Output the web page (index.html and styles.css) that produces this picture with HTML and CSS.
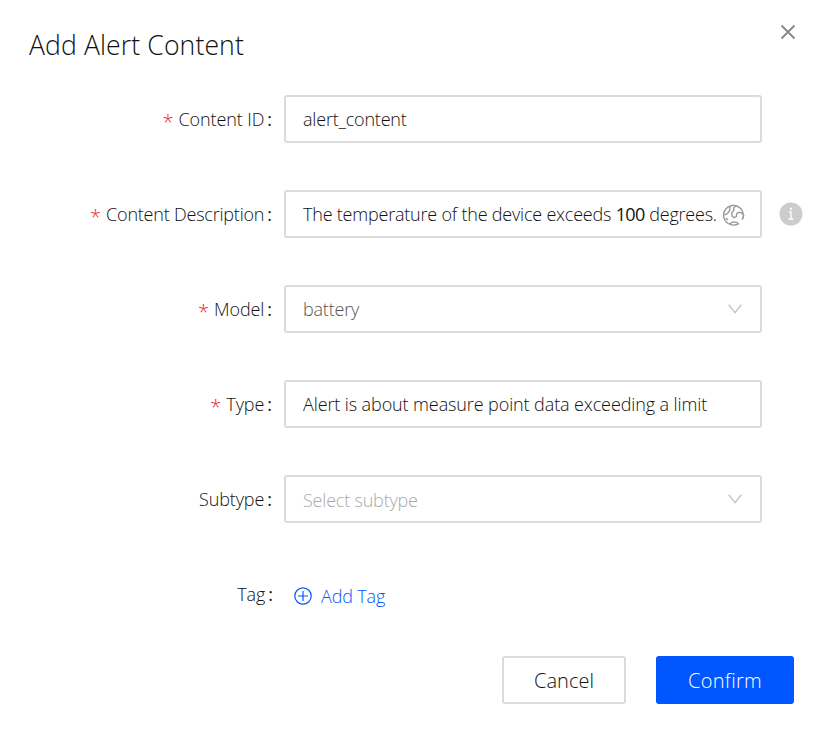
FILE: index.html
```html
<!DOCTYPE html>
<html lang="en">
<head>
<meta charset="utf-8">
<title>Add Alert Content</title>
<link rel="stylesheet" href="styles.css">
</head>
<body>
<main class="dialog">
  <header class="header">
    <h1 class="title">Add Alert Content</h1>
    <svg class="close" width="16" height="16" viewBox="0 0 16 16"><path d="M1.5 1.5l13 13M14.5 1.5l-13 13"/></svg>
  </header>
  <form class="form">
    <div class="row">
      <div class="label"><i class="req">*</i><span class="name">Content ID</span><b class="colon">:</b></div>
      <div class="field"><span class="value">alert_content</span></div>
    </div>
    <div class="row">
      <div class="label"><i class="req">*</i><span class="name desc">Content Description</span><b class="colon">:</b></div>
      <div class="field"><span class="value clip">The temperature of the device exceeds <span class="num">100</span> degrees.</span>
        <svg class="globe" width="22" height="22" viewBox="0 0 22 22"><path d="M19.2 15.6A9.8 9.8 0 1 0 16 19.3M19.2 15.6A9.8 9.8 0 0 0 20.8 11M1.6 11l3-1.6 2-3 .4-3.4M2.6 14.4l2.6 1.4M13 1.6l-2.4 2.6.2 2.2-2 2.2.2 3.4 2 1.6 2.4-1 .2-2.6 1.4-1.6 2.8.2 1.8 1.2M6.5 19.8l3.4-1.8 5 .6"/></svg>
      </div>
      <svg class="info" width="24" height="24" viewBox="0 0 24 24"><circle cx="12" cy="12" r="11.5"/><path d="M9.8 9.8h2.2v7M9.5 17h5"/><rect x="11" y="5.8" width="2" height="2"/></svg>
    </div>
    <div class="row">
      <div class="label"><i class="req">*</i><span class="name">Model</span><b class="colon">:</b></div>
      <div class="field"><span class="value muted">battery</span><svg class="arrow" width="14" height="10" viewBox="0 0 14 10"><path d="M.7.8L7 8.6 13.3.8"/></svg></div>
    </div>
    <div class="row">
      <div class="label"><i class="req">*</i><span class="name">Type</span><b class="colon">:</b></div>
      <div class="field"><span class="value v-type">Alert is about measure point data exceeding a limit</span></div>
    </div>
    <div class="row">
      <div class="label"><span class="name">Subtype</span><b class="colon">:</b></div>
      <div class="field"><span class="value placeholder">Select subtype</span><svg class="arrow" width="14" height="10" viewBox="0 0 14 10"><path d="M.7.8L7 8.6 13.3.8"/></svg></div>
    </div>
    <div class="row">
      <div class="label tag"><span class="name">Tag</span><b class="colon">:</b></div>
      <a class="add"><svg width="18" height="18" viewBox="0 0 18 18"><circle cx="9" cy="9" r="8.2"/><path d="M9 4v10M4 9h10"/></svg><span class="add-text">Add Tag</span></a>
    </div>
  </form>
  <footer class="footer">
    <button class="btn cancel"><span>Cancel</span></button>
    <button class="btn confirm"><span>Confirm</span></button>
  </footer>
</main>
</body>
</html>
```
FILE: styles.css
```css
* { box-sizing: border-box; }
body { margin: 0; background: #fff; color: #111; font: 300 18px/24px "Open Sans", "Noto Sans", sans-serif; }
.dialog { width: 823px; height: 731px; padding: 24px 27px 0 28px; }
.header { display: flex; justify-content: space-between; height: 71px; }
.title { margin: 1px 0 0 1px; font-size: 26.6px; line-height: 40px; font-weight: 300; letter-spacing: .1px; white-space: nowrap; }
.close { fill: none; stroke: #858585; stroke-width: 1.8; }
.row { display: flex; align-items: center; height: 48px; margin-bottom: 47px; }
.label { flex: none; width: 245px; padding-right: 1px; display: flex; justify-content: flex-end; align-items: center; white-space: nowrap; }
.tag { padding-right: 0; }
.name { letter-spacing: -.1px; }
.desc { letter-spacing: -.21px; }
.req { color: #f5222d; font-size: 20px; font-style: normal; margin-right: 5px; height: 18px; }
.colon { font-weight: 400; margin-left: 3px; }
.field { flex: none; display: flex; align-items: center; justify-content: space-between; width: 478px; height: 48px; margin-left: 11px; padding: 0 17px; border: 2px solid #dbdbdb; border-radius: 3px; }
.value { white-space: nowrap; letter-spacing: -.2px; }
.v-type { letter-spacing: -.11px; }
.clip { width: 413px; overflow: hidden; letter-spacing: -.21px; }
.num { font-weight: 400; letter-spacing: -.6px; }
.muted { color: #555; }
.placeholder { color: #aaa; position: relative; top: 1px; }
.arrow { fill: none; stroke: #c4c4c4; stroke-width: 1.4; margin-right: 1px; }
.globe { flex: none; fill: none; stroke: #999; stroke-width: 1.4; margin: 1px -2px 0 0; }
.info { flex: none; margin-left: 17px; fill: #ccc; }
.info path { fill: none; stroke: #fff; stroke-width: 1.3; }
.info rect { fill: #fff; }
.add { display: flex; align-items: center; margin: 4px 0 0 21px; color: #0057ff; }
.add svg { fill: none; stroke: #0057ff; stroke-width: 1.2; }
.add-text { margin-left: 9px; white-space: nowrap; letter-spacing: -.15px; }
.footer { display: flex; justify-content: flex-end; gap: 30px; padding-right: 2px; margin-top: -9px; }
.btn { height: 48px; width: 124px; padding: 2px 0 0; background: #fff; border: 2px solid #dbdbdb; border-radius: 3px; font: inherit; font-size: 20px; color: #111; }
.confirm { width: 138px; border-color: #0057ff; background: #0057ff; color: #fff; letter-spacing: .3px; }
```
